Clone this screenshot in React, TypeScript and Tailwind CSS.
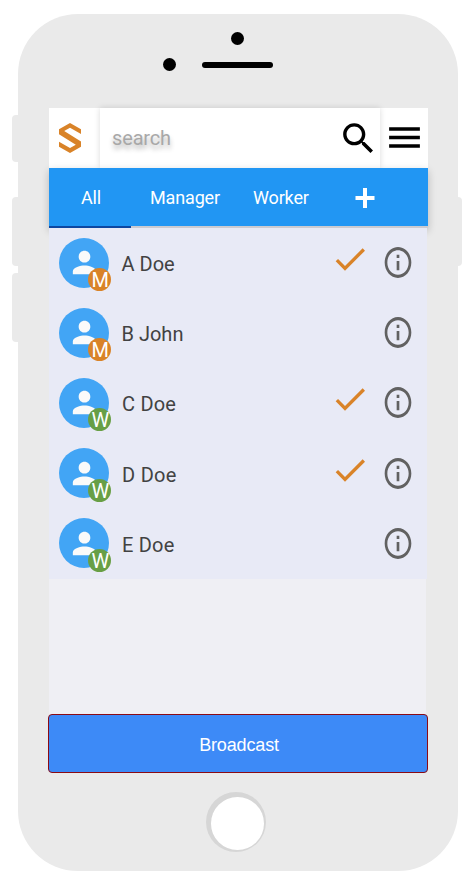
import React from "react";

type Person = { name: string; role: "M" | "W"; checked: boolean; indent: string };

const people: Person[] = [
  { name: "A Doe", role: "M", checked: true, indent: "ml-[12.5px] tracking-[0px]" },
  { name: "B John", role: "M", checked: false, indent: "ml-[12.5px] tracking-[0px]" },
  { name: "C Doe", role: "W", checked: true, indent: "ml-[13px] tracking-[0.2px]" },
  { name: "D Doe", role: "W", checked: true, indent: "ml-[13px] tracking-[0.3px]" },
  { name: "E Doe", role: "W", checked: false, indent: "ml-[13px] tracking-[0.2px]" },
];

function Logo() {
  return (
    <svg className="ml-[10px] h-[30px] w-[22px] shrink-0" viewBox="0 0 22 30" fill="#d98328">
      <path d="M11 0 22 6.2V11L11 4.8 5.2 8.1 22 18.5V23.8L11 30 0 23.8V18.8L11 25.1 16.8 21.8 0 11.2V6.2Z" />
    </svg>
  );
}

function Avatar({ role }: { role: "M" | "W" }) {
  return (
    <div className="relative ml-[10.5px] flex h-[50px] w-[50px] shrink-0 items-center justify-center rounded-full bg-[#42a5f5]">
      <svg className="h-[35px] w-[35px]" viewBox="0 0 24 24" fill="#fafafa">
        <path d="M12 12c2.21 0 4-1.79 4-4s-1.79-4-4-4-4 1.79-4 4 1.79 4 4 4zm0 2c-2.67 0-8 1.34-8 4v2h16v-2c0-2.66-5.33-4-8-4z" />
      </svg>
      <span
        className={`absolute left-[29px] top-[30.5px] flex h-[23px] w-[23px] items-center justify-center rounded-full pl-[2px] pt-[2px] text-[21px] leading-none text-white ${
          role === "M" ? "bg-[#d98328]" : "bg-[#689f45]"
        }`}
      >
        <span className="scale-x-95">{role}</span>
      </span>
    </div>
  );
}

function Row({ person }: { person: Person }) {
  return (
    <li className="flex h-[70.2px] items-center">
      <Avatar role={person.role} />
      <span className={`${person.indent} mt-[3px] flex-1 text-[20px] text-[#424242]`}>{person.name}</span>
      {person.checked && (
        <svg className="mr-[12px] mt-[-7px] h-[40px] w-[40px]" viewBox="0 0 24 24" fill="#d98328">
          <path d="M9 16.17 4.83 12l-1.42 1.41L9 19 21 7l-1.41-1.41z" />
        </svg>
      )}
      <svg className="mr-[12.6px] h-[37px] w-[32px]" viewBox="0 0 24 24" preserveAspectRatio="none" fill="#616161">
        <path d="M11 7h2v2h-2zm0 4h2v6h-2zm1-9C6.48 2 2 6.48 2 12s4.48 10 10 10 10-4.48 10-10S17.52 2 12 2zm0 18c-4.41 0-8-3.59-8-8s3.59-8 8-8 8 3.59 8 8-3.59 8-8 8z" />
      </svg>
    </li>
  );
}

export default function App() {
  return (
    <div className="h-[884px] w-[474px] bg-white pl-[18px] pt-[14px] font-['Roboto',sans-serif]">
      <div className="relative flex h-[857px] w-[440px] flex-col rounded-[60px] bg-[#eaeaea]">
        <i className="absolute left-[-6px] top-[101px] h-[47px] w-[6px] rounded-l-[4px] bg-[#eaeaea]" />
        <i className="absolute left-[-6px] top-[183px] h-[69px] w-[6px] rounded-l-[4px] bg-[#eaeaea]" />
        <i className="absolute left-[-6px] top-[259px] h-[69px] w-[6px] rounded-l-[4px] bg-[#eaeaea]" />
        <i className="absolute right-[-4px] top-[183px] h-[69px] w-[4px] rounded-r-[4px] bg-[#eaeaea]" />

        <div className="flex h-[94px] shrink-0 flex-col pt-[18.4px]">
          <span className="ml-[213px] h-[13px] w-[13px] rounded-full bg-black" />
          <div className="mt-[13px] flex items-center">
            <span className="ml-[145px] h-[13px] w-[13px] rounded-full bg-black" />
            <span className="ml-[26px] h-[6.5px] w-[70.5px] rounded-full bg-black" />
          </div>
        </div>

        <main className="ml-[31px] flex h-[665px] w-[379px] shrink-0 flex-col">
          <header className="flex h-[60px] items-center bg-white">
            <Logo />
            <div className="ml-[19px] flex h-[60px] w-[280px] items-center bg-white shadow-[0_0_6px_rgba(0,0,0,0.15)]">
              <span className="ml-[12px] flex-1 text-[20px] tracking-[-0.15px] text-[#a8a8a8] [text-shadow:0_4px_5px_rgba(0,0,0,0.3)]">
                search
              </span>
              <svg className="mr-[1px] h-[41px] w-[41px]" viewBox="0 0 24 24">
                <path d="M15.5 14h-.79l-.28-.27C15.41 12.59 16 11.11 16 9.5 16 5.91 13.09 3 9.5 3S3 5.91 3 9.5 5.91 16 9.5 16c1.61 0 3.09-.59 4.23-1.57l.27.28v.79l5 4.99L20.49 19l-4.99-5zm-6 0C7.01 14 5 11.99 5 9.5S7.01 5 9.5 5 14 7.01 14 9.5 11.99 14 9.5 14z" />
              </svg>
            </div>
            <svg className="ml-[3.5px] mt-[-1px] h-[41px] w-[41px]" viewBox="0 0 24 24">
              <path d="M3 18h18v-2H3v2zm0-5h18v-2H3v2zm0-7v2h18V6H3z" />
            </svg>
          </header>

          <nav className="flex h-[60px] shrink-0 flex-col shadow-[0_3px_8px_rgba(0,0,0,0.22)]">
            <div className="flex h-[58px] items-center bg-[#2196f3] text-[18px] tracking-[-0.15px] text-white">
              <span className="ml-[32px] w-[69px]">All</span>
              <span className="w-[103px]">Manager</span>
              <span className="w-[102px]">Worker</span>
              <svg className="mt-[1px] h-[20px] w-[20px]" viewBox="0 0 20 20" fill="white">
                <path d="M8 0h4v8h7.5v4H12v8H8v-8H.5V8H8z" />
              </svg>
            </div>
            <div className="h-[2px] bg-[#cbcbd1]">
              <div className="h-full w-[82px] bg-[#0d47a1]" />
            </div>
          </nav>

          <ul className="relative z-10 ml-[-0.5px] h-[351px] w-[378px] shrink-0 bg-[#e8eaf6] [&>li]:mt-[-0.6px] [&>li]:mb-[0.6px]">
            {people.map((person) => (
              <Row key={person.name} person={person} />
            ))}
          </ul>
          <div className="ml-[-0.5px] h-[135px] w-[377px] shrink-0 bg-[#efeff4]" />
          <button className="ml-[-1px] h-[59px] w-[380px] shrink-0 rounded-[4px] border-[1.5px] border-[#8b0a14] bg-[#3d8af7] pl-[2px] pt-[3px] font-['Liberation_Sans',sans-serif] text-[18px] tracking-[-0.15px] text-white">
            <span>Broadcast</span>
          </button>
        </main>

        <div className="ml-[188px] mt-[19px] flex h-[60px] w-[60px] shrink-0 rounded-full bg-[#d6d6d6] pl-[5px] pt-[5px]">
          <span className="h-[53px] w-[53px] rounded-full bg-white" />
        </div>
      </div>
    </div>
  );
}
